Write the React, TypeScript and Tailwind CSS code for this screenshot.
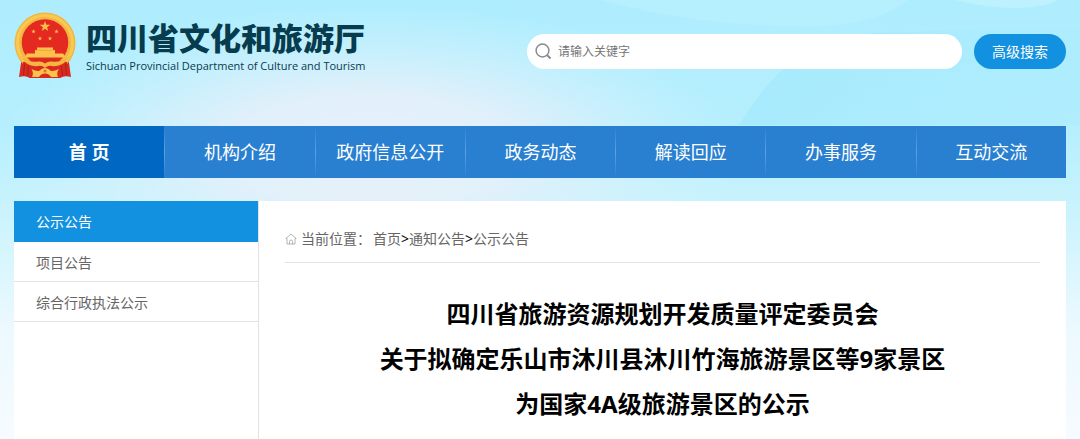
import React, { useState } from 'react';

const NAV_ITEMS = ['机构介绍', '政府信息公开', '政务动态', '解读回应', '办事服务', '互动交流'];

const SIDE_ITEMS = ['公示公告', '项目公告', '综合行政执法公示'];

const TITLE_LINES = [
  '四川省旅游资源规划开发质量评定委员会',
  '关于拟确定乐山市沐川县沐川竹海旅游景区等9家景区',
  '为国家4A级旅游景区的公示',
];

const STAR = '0,-1 0.235,-0.324 0.951,-0.309 0.38,0.124 0.588,0.809 0,0.4 -0.588,0.809 -0.38,0.124 -0.951,-0.309 -0.235,-0.324';

const Emblem: React.FC = () => (
  <svg viewBox="0 0 62 67" className="h-[67px] w-[62px] shrink-0" role="img" aria-label="国徽">
    {/* Drapes */}
    <path d="M8 44 H54 L57 65 Q50 63 46 66 H16 Q12 63 5 65 Z" fill="#d92a20" />
    <circle cx="31" cy="31" r="30.5" fill="#f3b63f" />
    <circle cx="31" cy="31" r="27.5" fill="none" stroke="#f9c955" strokeWidth="3" />
    <circle cx="31" cy="30.5" r="23.3" fill="#e42a20" />
    {/* Stars */}
    <g fill="#fbbf4a">
      <polygon points={STAR} transform="translate(31 14.5) scale(5.5)" />
      <polygon points={STAR} transform="translate(19.5 19.5) scale(2.3)" />
      <polygon points={STAR} transform="translate(42.5 19.5) scale(2.3)" />
      <polygon points={STAR} transform="translate(26 26.5) scale(2.3)" />
      <polygon points={STAR} transform="translate(36 26.5) scale(2.3)" />
    </g>
    {/* Gate tower */}
    <path d="M23 35.5 H39 V38 H41 V41.5 H49 L52 45.5 H10 L13 41.5 H21 V38 H23 Z" fill="#fbc34c" />
    <path d="M22 38.3 H40" stroke="#f09a3a" strokeWidth="0.7" />
    <path d="M9 50 Q18 48 25 47 H37 Q44 48 53 50 L55 64 Q50 63 46 66 H16 Q12 63 7 64 Z" fill="#d92a20" />
    <path d="M10.5 52 L9.5 63 M14.5 54 L13.5 64 M51.5 52 L52.5 63 M47.5 54 L48.5 64" stroke="#b01f1a" strokeWidth="1" />
    {/* Sheaf tails and bow */}
    <path d="M6 44 Q16 51 24 49.5 Q28 49 31 51.5 Q34 49 38 49.5 Q46 51 56 44 L50 51 Q43 55 38 54 Q34 53 31 56 Q28 53 24 54 Q19 55 12 51 Z" fill="#f6b640" />
    <path d="M17.5 57 Q22 59.5 25 59 Q28 56 31 56 Q34 56 37 59 Q40 59.5 45 57 Q42 61 44 65 H37 Q35 61.5 31 61.5 Q27 61.5 25 65 H18 Q20 61 17.5 57 Z" fill="#fbc34c" />
    <circle cx="31" cy="59" r="1.5" fill="#e0702c" />
  </svg>
);

const Backdrop: React.FC = () => (
  <svg
    viewBox="0 0 1080 439"
    preserveAspectRatio="none"
    className="absolute inset-0 -z-10 h-full w-full"
    aria-hidden="true"
  >
    <defs>
      <linearGradient id="sky" x1="0" y1="0" x2="0" y2="1">
        <stop offset="0" stopColor="#aeedfe" />
        <stop offset="0.3" stopColor="#b6effe" />
        <stop offset="0.48" stopColor="#caf3fd" />
        <stop offset="0.75" stopColor="#ecf9fe" />
        <stop offset="1" stopColor="#f6fbff" />
      </linearGradient>
      <radialGradient id="haze">
        <stop offset="0" stopColor="#e9f0fa" />
        <stop offset="0.4" stopColor="#e5f0fa" stopOpacity="0.9" />
        <stop offset="1" stopColor="#d8f2fc" stopOpacity="0" />
      </radialGradient>
      <linearGradient id="wave" x1="0" y1="0" x2="1" y2="0">
        <stop offset="0" stopColor="#9ee8fd" stopOpacity="0.6" />
        <stop offset="1" stopColor="#a8ebfd" stopOpacity="0.4" />
      </linearGradient>
    </defs>
    <rect width="1080" height="439" fill="url(#sky)" />
    <ellipse cx="370" cy="150" rx="370" ry="145" fill="url(#haze)" />
    <path d="M739 125 Q768 78 795 60 Q850 28 910 32 Q1000 26 1080 28 V125 Z" fill="url(#wave)" />
    <path d="M790 26 Q870 30 908 0 H600 Q700 26 790 26 Z" fill="#b9f0fe" opacity="0.7" />
    <path d="M955 0 Q985 8 1020 8 Q1050 6 1057 0 Z" fill="#c4f2fe" opacity="0.7" />
  </svg>
);

export default function App() {
  const [keyword, setKeyword] = useState('');

  return (
    <div className="relative isolate flex min-h-screen flex-col px-3.5 font-['Noto_Sans','Noto_Sans_CJK_SC',sans-serif]">
      <Backdrop />

      {/* Header */}
      <header className="flex h-[126px] items-start justify-between pt-3">
        <a href="#" className="flex gap-2.5 text-[#063c4e]">
          <Emblem />
          <div className="pt-2">
            <h1 className="text-[31px] leading-9 font-black whitespace-nowrap">四川省文化和旅游厅</h1>
            <p className="font-['Open_Sans',sans-serif] text-[11px] leading-5 font-medium whitespace-nowrap">
              Sichuan Provincial Department of Culture and Tourism
            </p>
          </div>
        </a>
        <form className="flex gap-3 pt-[22px]" onSubmit={(e) => e.preventDefault()}>
          <label className="flex h-[35px] w-[435px] items-center gap-1.5 rounded-full bg-white pl-2">
            <svg viewBox="0 0 17 17" className="h-[17px] w-[17px]" fill="none" stroke="#8a8a8a" strokeWidth="1.5">
              <circle cx="7.5" cy="7.5" r="6.4" />
              <path d="M12 12 L15.5 15.5" strokeWidth="2" />
            </svg>
            <input
              type="text"
              aria-label="关键字"
              value={keyword}
              onChange={(e) => setKeyword(e.target.value)}
              placeholder="请输入关键字"
              className="min-w-0 flex-1 bg-transparent text-xs text-gray-700 outline-none placeholder:text-[#757575]"
            />
          </label>
          <button type="submit" className="h-[35px] w-[92px] rounded-full bg-[#1191e0] text-sm text-white">
            高级搜索
          </button>
        </form>
      </header>

      {/* Main navigation */}
      <nav className="grid h-[52px] grid-cols-7 bg-[#2980d1] text-lg text-white">
        <a href="#" className="flex items-center justify-center bg-[#0067c2] font-bold">
          首 页
        </a>
        {NAV_ITEMS.map((item) => (
          <a key={item} href="#" className="flex">
            <span className="w-px bg-gradient-to-b from-[#2980d1] via-[#5aa2e4] to-[#2980d1]" />
            <span className="flex flex-1 items-center justify-center">{item}</span>
          </a>
        ))}
      </nav>

      {/* Content */}
      <div className="mt-[23px] flex flex-1 bg-white">
        <aside className="w-[245px] shrink-0 border-r border-[#e2e2e2]">
          <ul className="text-sm text-[#666]">
            {SIDE_ITEMS.map((item, i) => (
              <li key={item}>
                <a
                  href="#"
                  className={`flex items-center pl-[22px] ${
                    i === 0 ? 'h-[41px] bg-[#1191e0] text-white' : 'h-10 border-b border-[#e2e2e2] pt-0.5'
                  }`}
                >
                  {item}
                </a>
              </li>
            ))}
          </ul>
        </aside>

        <main className="min-w-0 flex-1 px-[26px] pt-3.5">
          <div className="flex h-12 items-center border-b border-[#e2e2e2] text-sm text-[#666]">
            <svg viewBox="0 0 12 12" className="mr-1 h-3 w-3" fill="none" stroke="#aaa" strokeWidth="0.9">
              <path d="M2 5.5 H0.8 L6 1 L11.2 5.5 H10 V11 H2 Z M4.5 11 V8.5 Q4.5 7 6 7 Q7.5 7 7.5 8.5 V11" />
            </svg>
            <span className="mr-0.5">当前位置：</span>
            <a href="#">首页</a>
            <span className="text-black">&gt;</span>
            <a href="#">通知公告</a>
            <span className="text-black">&gt;</span>
            <a href="#">公示公告</a>
          </div>
          <h2 className="pt-7 text-center text-2xl leading-[45px] font-bold text-black">
            {TITLE_LINES.map((line) => (
              <span key={line} className="block">
                {line}
              </span>
            ))}
          </h2>
        </main>
      </div>
    </div>
  );
}
